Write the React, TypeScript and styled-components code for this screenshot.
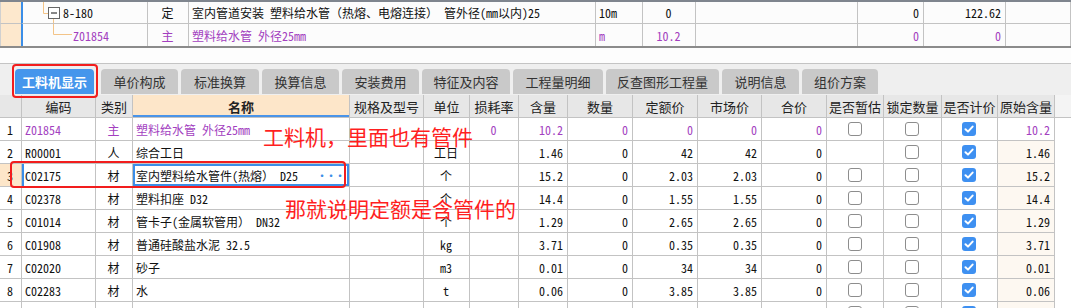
import React from "react";
import styled, { createGlobalStyle, css } from "styled-components";

const Global = createGlobalStyle`
  html, body { margin: 0; padding: 0; background: #ffffff; }
  body { overflow: hidden; }
  * { box-sizing: border-box; }
`;

const CELL_FONT = `"Noto Sans Mono CJK SC", "Noto Sans CJK SC", "DejaVu Sans Mono", monospace`;
const UI_FONT = `"Noto Sans CJK SC", "Noto Sans", sans-serif`;
const PURPLE = "#a33fbf";
const GRID = "#c3c3c3";

const Page = styled.div`
  position: relative;
  width: 1071px;
  height: 308px;
  overflow: hidden;
  background: #fdfdfd;
  font-family: ${CELL_FONT};
  font-size: 12px;
  color: #111;
`;

/* ---------- top tree table ---------- */
const TopTable = styled.div`
  display: grid;
  grid-template-columns: 21px 127px 41px 407px 47px 53px 162px 66px 82px 65px;
  border-top: 2px solid #7f858e;
  border-bottom: 2px solid #8b8b8b;
  background: #fcfcfc;
`;

const TopCell = styled.div<{ $align?: "left" | "center" | "right"; $gutter?: boolean; $sel?: boolean; $last?: boolean; $purple?: boolean }>`
  height: 22px;
  border-right: 1px solid ${GRID};
  border-bottom: ${(p) => (p.$last ? "none" : `1px solid ${GRID}`)};
  display: flex;
  align-items: center;
  justify-content: ${(p) => (p.$align === "center" ? "center" : p.$align === "right" ? "flex-end" : "flex-start")};
  padding: 0 4px 0 3px;
  white-space: nowrap;
  overflow: hidden;
  color: ${(p) => (p.$purple ? PURPLE : "#111")};
  ${(p) => p.$gutter && css`background: #fde8cd; border-right: none; border-left: 1px solid #d0d0d0;`}
  ${(p) => p.$sel && css`border-left: 2px solid #3b8ee8; padding-left: 0;`}
`;

const TreeText = styled.span<{ $purple?: boolean }>`
  color: ${(p) => (p.$purple ? PURPLE : "#111")};
`;

const Spacer = styled.div`
  height: 15px;
  background: #fdfdfd;
`;

/* ---------- tabs ---------- */
const TabStrip = styled.div`
  display: flex;
  align-items: flex-end;
  gap: 3px;
  height: 32px;
  padding-left: 15px;
  border-top: 1px solid #c4c4c4;
  background: #efefef;
  font-family: ${UI_FONT};
`;

const Tab = styled.div<{ $w: number; $active?: boolean }>`
  width: ${(p) => p.$w}px;
  height: 25px;
  margin-bottom: 1px;
  margin-right: ${(p) => (p.$active ? "4px" : "0")};
  border-radius: 4px 4px 0 0;
  display: flex;
  align-items: center;
  justify-content: center;
  font-size: 13px;
  color: ${(p) => (p.$active ? "#ffffff" : "#333")};
  font-weight: ${(p) => (p.$active ? 700 : 400)};
  background: ${(p) => (p.$active ? "#4596ec" : "#c9c9c9")};
`;

/* ---------- lower grid ---------- */
const Grid = styled.div`
  display: grid;
  grid-template-columns: 22px 74px 37px 217px 74px 46px 49px 49px 65px 65px 64px 65px 57px 58px 56px 57px 1fr;
`;

const Head = styled.div<{ $key?: boolean; $fill?: boolean }>`
  height: 23px;
  border-right: ${(p) => (p.$fill ? "none" : `1px solid ${GRID}`)};
  border-bottom: 1px solid ${GRID};
  background: ${(p) => (p.$key ? "#fde6c9" : p.$fill ? "#f4f4f4" : "#e7e7e7")};
  display: flex;
  align-items: center;
  justify-content: center;
  font-family: ${UI_FONT};
  font-size: 13px;
  color: #222;
  font-weight: ${(p) => (p.$key ? 700 : 400)};
  white-space: nowrap;
  ${(p) => p.$key && css`box-shadow: inset 0 -2px 0 #4a94e8;`}
`;

type Align = "left" | "center" | "right";

const Cell = styled.div<{ $align?: Align; $purple?: boolean; $bg?: string; $fill?: boolean; $selRow?: boolean; $selCell?: boolean }>`
  position: relative;
  height: 23px;
  border-right: ${(p) => (p.$fill ? "none" : `1px solid ${GRID}`)};
  border-bottom: ${(p) => (p.$fill ? "none" : `1px solid ${GRID}`)};
  background: ${(p) => p.$bg || "#ffffff"};
  display: flex;
  align-items: center;
  justify-content: ${(p) => (p.$align === "center" ? "center" : p.$align === "right" ? "flex-end" : "flex-start")};
  padding: 0 4px 0 3px;
  white-space: nowrap;
  overflow: hidden;
  color: ${(p) => (p.$purple ? PURPLE : "#111")};
  ${(p) => p.$selRow && css`box-shadow: inset 2px 0 0 #3b8ee8;`}
  ${(p) => p.$selCell && css`box-shadow: inset 0 0 0 2px #3b8ee8;`}
`;

const Ellipsis = styled.span`
  position: absolute;
  right: 6px;
  top: 3px;
  color: #3b8ee8;
  font-size: 12px;
  letter-spacing: -3px;
`;

const Box = styled.span<{ $on?: boolean }>`
  width: 14px;
  height: 14px;
  border-radius: 3px;
  border: ${(p) => (p.$on ? "none" : "1.5px solid #8d8d8d")};
  background: ${(p) => (p.$on ? "#3e90f1" : "#ffffff")};
  display: flex;
  align-items: center;
  justify-content: center;
`;

/* ---------- annotations ---------- */
const Note = styled.div<{ $x: number; $y: number }>`
  position: absolute;
  left: ${(p) => p.$x}px;
  top: ${(p) => p.$y}px;
  font-family: ${UI_FONT};
  font-size: 21px;
  line-height: 1;
  color: #ff1f1f;
  white-space: nowrap;
  pointer-events: none;
`;

const Frame = styled.div<{ $x: number; $y: number; $w: number; $h: number }>`
  position: absolute;
  left: ${(p) => p.$x}px;
  top: ${(p) => p.$y}px;
  width: ${(p) => p.$w}px;
  height: ${(p) => p.$h}px;
  border: 2px solid #f21d1d;
  border-radius: 4px;
  pointer-events: none;
`;

const Check = ({ on }: { on?: boolean }) => (
  <Box $on={on}>
    {on && (
      <svg width="10" height="10" viewBox="0 0 10 10">
        <polyline points="1.5,5.2 4,7.6 8.6,2.6" fill="none" stroke="#fff" strokeWidth="2" strokeLinecap="round" strokeLinejoin="round" />
      </svg>
    )}
  </Box>
);

type Row = {
  code: string; type: string; name: string; unit: string; loss: string;
  qty: string; num: string; price: string; market: string; total: string;
  est: boolean; orig: string; purple?: boolean;
};

const rows: Row[] = [
  { code: "Z01854", type: "主", name: "塑料给水管 外径25mm", unit: "", loss: "0", qty: "10.2", num: "0", price: "0", market: "0", total: "0", est: true, orig: "10.2", purple: true },
  { code: "R00001", type: "人", name: "综合工日", unit: "工日", loss: "", qty: "1.46", num: "0", price: "42", market: "42", total: "0", est: false, orig: "1.46" },
  { code: "C02175", type: "材", name: "室内塑料给水管件(热熔） D25", unit: "个", loss: "", qty: "15.2", num: "0", price: "2.03", market: "2.03", total: "0", est: true, orig: "15.2" },
  { code: "C02378", type: "材", name: "塑料扣座 D32", unit: "个", loss: "", qty: "14.4", num: "0", price: "1.55", market: "1.55", total: "0", est: true, orig: "14.4" },
  { code: "C01014", type: "材", name: "管卡子(金属软管用） DN32", unit: "个", loss: "", qty: "1.29", num: "0", price: "2.65", market: "2.65", total: "0", est: true, orig: "1.29" },
  { code: "C01908", type: "材", name: "普通硅酸盐水泥 32.5", unit: "kg", loss: "", qty: "3.71", num: "0", price: "0.35", market: "0.35", total: "0", est: true, orig: "3.71" },
  { code: "C02020", type: "材", name: "砂子", unit: "m3", loss: "", qty: "0.01", num: "0", price: "34", market: "34", total: "0", est: true, orig: "0.01" },
  { code: "C02283", type: "材", name: "水", unit: "t", loss: "", qty: "0.06", num: "0", price: "3.85", market: "3.85", total: "0", est: true, orig: "0.06" },
  { code: "C00000", type: "材", name: "其他材料费", unit: "元", loss: "", qty: "1", num: "0", price: "1", market: "1", total: "0", est: true, orig: "1" },
];

const tabs: [string, number][] = [
  ["工料机显示", 79], ["单价构成", 77], ["标准换算", 78], ["换算信息", 77], ["安装费用", 77],
  ["特征及内容", 88], ["工程量明细", 90], ["反查图形工程量", 113], ["说明信息", 77], ["组价方案", 76],
];

const heads = ["", "编码", "类别", "名称", "规格及型号", "单位", "损耗率", "含量", "数量", "定额价", "市场价", "合价", "是否暂估", "锁定数量", "是否计价", "原始含量"];

export default function App() {
  return (
    <Page>
      <Global />
      <TopTable>
        <TopCell $gutter />
        <TopCell $sel>
          <svg width="40" height="22" viewBox="0 0 40 22">
            <path d="M20.5 0 V11.5 H25" stroke="#f3c488" strokeWidth="1" fill="none" />
            <path d="M30.5 17 V22" stroke="#f3c488" strokeWidth="1" fill="none" />
            <rect x="25.5" y="5.5" width="11" height="11" fill="#fff" stroke="#666" strokeWidth="1" />
            <line x1="28" y1="11" x2="34" y2="11" stroke="#111" strokeWidth="1" />
          </svg>
          <TreeText>8-180</TreeText>
        </TopCell>
        <TopCell $align="center">定</TopCell>
        <TopCell>室内管道安装  塑料给水管（热熔、电熔连接） 管外径(mm以内)25</TopCell>
        <TopCell>10m</TopCell>
        <TopCell $align="center">0</TopCell>
        <TopCell />
        <TopCell $align="right">0</TopCell>
        <TopCell $align="right">122.62</TopCell>
        <TopCell />

        <TopCell $gutter $last />
        <TopCell $sel $last>
          <svg width="50" height="22" viewBox="0 0 50 22">
            <path d="M30.5 0 V10.5 H49" stroke="#f3c488" strokeWidth="1" fill="none" />
          </svg>
          <TreeText $purple>Z01854</TreeText>
        </TopCell>
        <TopCell $last $align="center" $purple>主</TopCell>
        <TopCell $last $purple>塑料给水管 外径25mm</TopCell>
        <TopCell $last $purple>m</TopCell>
        <TopCell $last $align="center" $purple>10.2</TopCell>
        <TopCell $last />
        <TopCell $last $align="right" $purple>0</TopCell>
        <TopCell $last $align="right" $purple>0</TopCell>
        <TopCell $last />
      </TopTable>

      <Spacer />

      <TabStrip>
        {tabs.map(([t, w], i) => (
          <Tab key={t} $w={w} $active={i === 0}>{t}</Tab>
        ))}
      </TabStrip>

      <Grid>
        {heads.map((h, i) => (
          <Head key={i} $key={h === "名称"}>{h}</Head>
        ))}
        <Head $fill />

        {rows.map((r, i) => {
          const sel = i === 2;
          const p = r.purple;
          return (
            <React.Fragment key={i}>
              <Cell $align="center" $bg={sel ? "#fde6c9" : undefined}>{i + 1}</Cell>
              <Cell $purple={p} $selRow={sel}>{r.code}</Cell>
              <Cell $align="center" $purple={p}>{r.type}</Cell>
              <Cell $purple={p} $selCell={sel}>
                {r.name}
                {sel && <Ellipsis>···</Ellipsis>}
              </Cell>
              <Cell />
              <Cell $align="center">{r.unit}</Cell>
              <Cell $align="center" $purple={p}>{r.loss}</Cell>
              <Cell $align="right" $purple={p}>{r.qty}</Cell>
              <Cell $align="right" $purple={p}>{r.num}</Cell>
              <Cell $align="right" $purple={p}>{r.price}</Cell>
              <Cell $align="right" $purple={p}>{r.market}</Cell>
              <Cell $align="right" $purple={p}>{r.total}</Cell>
              <Cell $align="center">{r.est && <Check />}</Cell>
              <Cell $align="center"><Check /></Cell>
              <Cell $align="center"><Check on /></Cell>
              <Cell $align="right" $purple={p} $bg={p ? undefined : "#fdf8f1"}>{r.orig}</Cell>
              <Cell $fill />
            </React.Fragment>
          );
        })}
      </Grid>

      <Frame $x={12} $y={64} $w={86} $h={34} />
      <Frame $x={10} $y={161} $w={336} $h={27} />
      <Note $x={263} $y={126}>工料机，里面也有管件</Note>
      <Note $x={285} $y={198}>那就说明定额是含管件的</Note>
    </Page>
  );
}
